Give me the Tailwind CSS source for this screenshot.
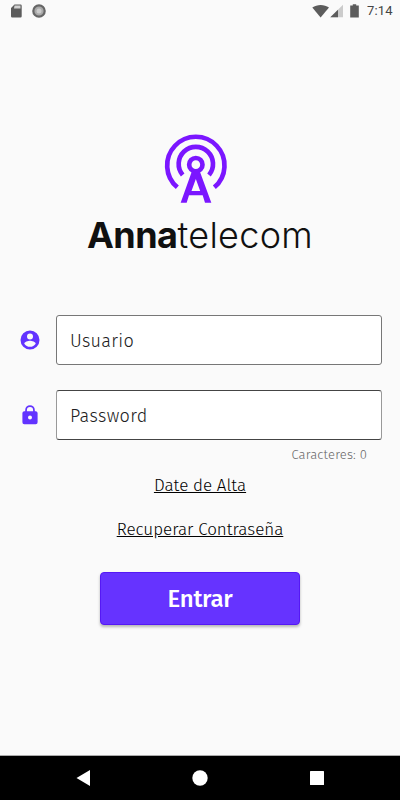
<!DOCTYPE html>
<html lang="es">
<head>
    <meta charset="UTF-8">
    <meta name="viewport" content="width=device-width, initial-scale=1.0">
    <title>Annatelecom</title>
    <script src="https://cdn.jsdelivr.net/npm/@tailwindcss/browser@4"></script>
</head>
<body class="bg-[#fafafa] h-[800px] w-[400px] flex flex-col overflow-hidden font-['Fira_Sans','Noto_Sans',sans-serif]">

    <!-- Status bar -->
    <header class="h-6 shrink-0 flex items-center justify-between pl-[10px] pr-[6px] pb-[2px] text-[#5f5f5f]">
        <div class="flex items-center gap-[9px]">
            <svg class="w-[13px] h-[14px]" viewBox="0 0 12 14">
                <path d="M4 .5h6a1.2 1.2 0 0 1 1.2 1.2v10.6A1.2 1.2 0 0 1 10 13.500H1.700A1.200 1.200 0 0 1 .5 12.300V4z" fill="#5c5c5c"/>
                <path d="M4 1.500h6v3H3.500z" fill="#d2d2d2"/>
            </svg>
            <svg class="w-[14px] h-[14px]" viewBox="0 0 14 14">
                <circle cx="7" cy="7" r="5.700" fill="#aaa" stroke="#666" stroke-width="2.200"/>
                <circle cx="7" cy="7" r="2.500" fill="#ccc"/>
            </svg>
        </div>
        <div class="flex items-center">
            <svg class="w-[18px] h-[14px]" viewBox="0 0 18 14">
                <path d="M.3 3.500C5 0 12.300 0 17 3.500L8.600 13.600z" fill="#5c5c5c"/>
            </svg>
            <svg class="w-[13px] h-[14px]" viewBox="0 0 13 14">
                <path d="M13 .8v12.400H.3z" fill="#cbcbcb"/>
                <path d="M8 5.800v7.400H.3z" fill="#5c5c5c"/>
            </svg>
            <svg class="w-[9px] h-[14px] ml-[7px] mr-px" viewBox="0 0 9 14">
                <path d="M2.800.3h3.400v1.300h2.600v12H.2v-12h2.600z" fill="#5c5c5c"/>
            </svg>
            <span class="font-['Roboto'] text-[13px] leading-[14px] ml-[7px] w-[27px] whitespace-nowrap tracking-[0.2px] text-[#444] [font-weight:450]">7:14</span>
        </div>
    </header>

    <main class="flex-1 flex flex-col items-center">
        <!-- Logo -->
        <svg class="w-[92px] h-[85px] mt-[101px] mr-[8px]" viewBox="0 0 276 255" fill="none" stroke="#7b16ff" stroke-width="14">
            <path d="M82 187A86 86 0 1 1 193 187"/>
            <path d="M98 150A51.500 51.500 0 1 1 177 150"/>
            <circle cx="137.500" cy="119" r="20" stroke-width="14"/>
            <path d="M126 138h23l35 95h-19l-7-22h-41l-7 22H92zM137.500 162l-13 36h26z" fill="#7b16ff" stroke="none" fill-rule="evenodd"/>
        </svg>
        <h1 class="h-[50px] flex justify-center font-['Inter'] text-[36px] leading-[50px] text-[#101010] whitespace-nowrap">
            <span class="font-bold tracking-[-0.5px]">Anna</span><span class="[font-weight:340] tracking-[0.3px]">telecom</span>
        </h1>

        <!-- Login form -->
        <form class="w-full mt-[55px] flex flex-col">
            <div class="flex items-center pl-[18px] pr-[18px]">
                <svg class="w-[24px] h-[24px] mr-[14px]" viewBox="0 0 24 24" fill="#6233ff">
                    <path d="M12 2.500a9.500 9.500 0 1 0 0 19 9.500 9.500 0 0 0 0-19zm0 2.900a3 3 0 1 1 0 6 3 3 0 0 1 0-6zm0 13.400c-2.400 0-4.500-1.200-5.700-3.100 0-1.900 3.800-2.900 5.700-2.900s5.700 1 5.700 2.900a6.800 6.800 0 0 1-5.700 3.100z"/>
                </svg>
                <input type="text" placeholder="Usuario" class="w-[326px] h-[50px] px-[13px] pt-[2px] bg-white border border-[#777] rounded-[3px] text-[18px] font-light tracking-[0.3px] placeholder:text-[#202020]">
            </div>
            <div class="flex items-center pl-[18px] pr-[18px] mt-[25px]">
                <svg class="w-[24px] h-[24px] mr-[14px]" viewBox="0 0 24 24" fill="#6233ff">
                    <path d="M17.700 8.300h-.9V7a4.800 4.800 0 0 0-9.600 0v1.300h-.9A1.900 1.900 0 0 0 4.400 10v9.300a1.900 1.900 0 0 0 1.900 1.900h11.400a1.900 1.900 0 0 0 1.900-1.900V10a1.900 1.900 0 0 0-1.900-1.700zM12 16.600a2 2 0 1 1 0-4 2 2 0 0 1 0 4zM8.900 8.300V7a3.100 3.100 0 0 1 6.200 0v1.300z"/>
                </svg>
                <input type="text" placeholder="Password" class="w-[326px] h-[50px] px-[13px] pt-[2px] bg-white border border-x-[#999] border-y-[#444] rounded-[3px] text-[18px] font-light tracking-[0.4px] placeholder:text-[#202020]">
            </div>
            <p class="self-end mr-[33px] mt-[5px] h-5 text-[13px] leading-5 font-light tracking-[0.15px] text-[#666]">Caracteres: 0</p>
        </form>

        <a href="#" class="mt-[9px] h-6 text-[17px] leading-6 font-light text-black underline whitespace-nowrap">Date de Alta</a>
        <a href="#" class="mt-[20px] h-6 text-[17px] leading-6 font-light text-black underline whitespace-nowrap">Recuperar Contraseña</a>

        <button type="submit" class="mt-[30px] w-[200px] h-[53px] bg-[#6633ff] border border-[#5518f5] rounded-[4px] shadow-[0_2px_3px_rgba(0,0,0,0.28)] text-white text-[24px] font-medium tracking-[-0.3px]">Entrar</button>
    </main>

    <!-- Navigation bar -->
    <nav class="h-[45px] shrink-0 bg-black border-t border-[#aaa] flex items-center justify-between pl-[76px] pr-[76px]">
        <svg class="w-[14px] h-[16px]" viewBox="0 0 14 16" fill="#fff"><path d="M14 0v16L.5 8z"/></svg>
        <svg class="w-[16px] h-[16px]" viewBox="0 0 16 16" fill="#fff"><circle cx="8" cy="8" r="7.700"/></svg>
        <div class="w-[14px] h-[14px] bg-white rounded-[0.5px]"></div>
    </nav>
</body>
</html>
